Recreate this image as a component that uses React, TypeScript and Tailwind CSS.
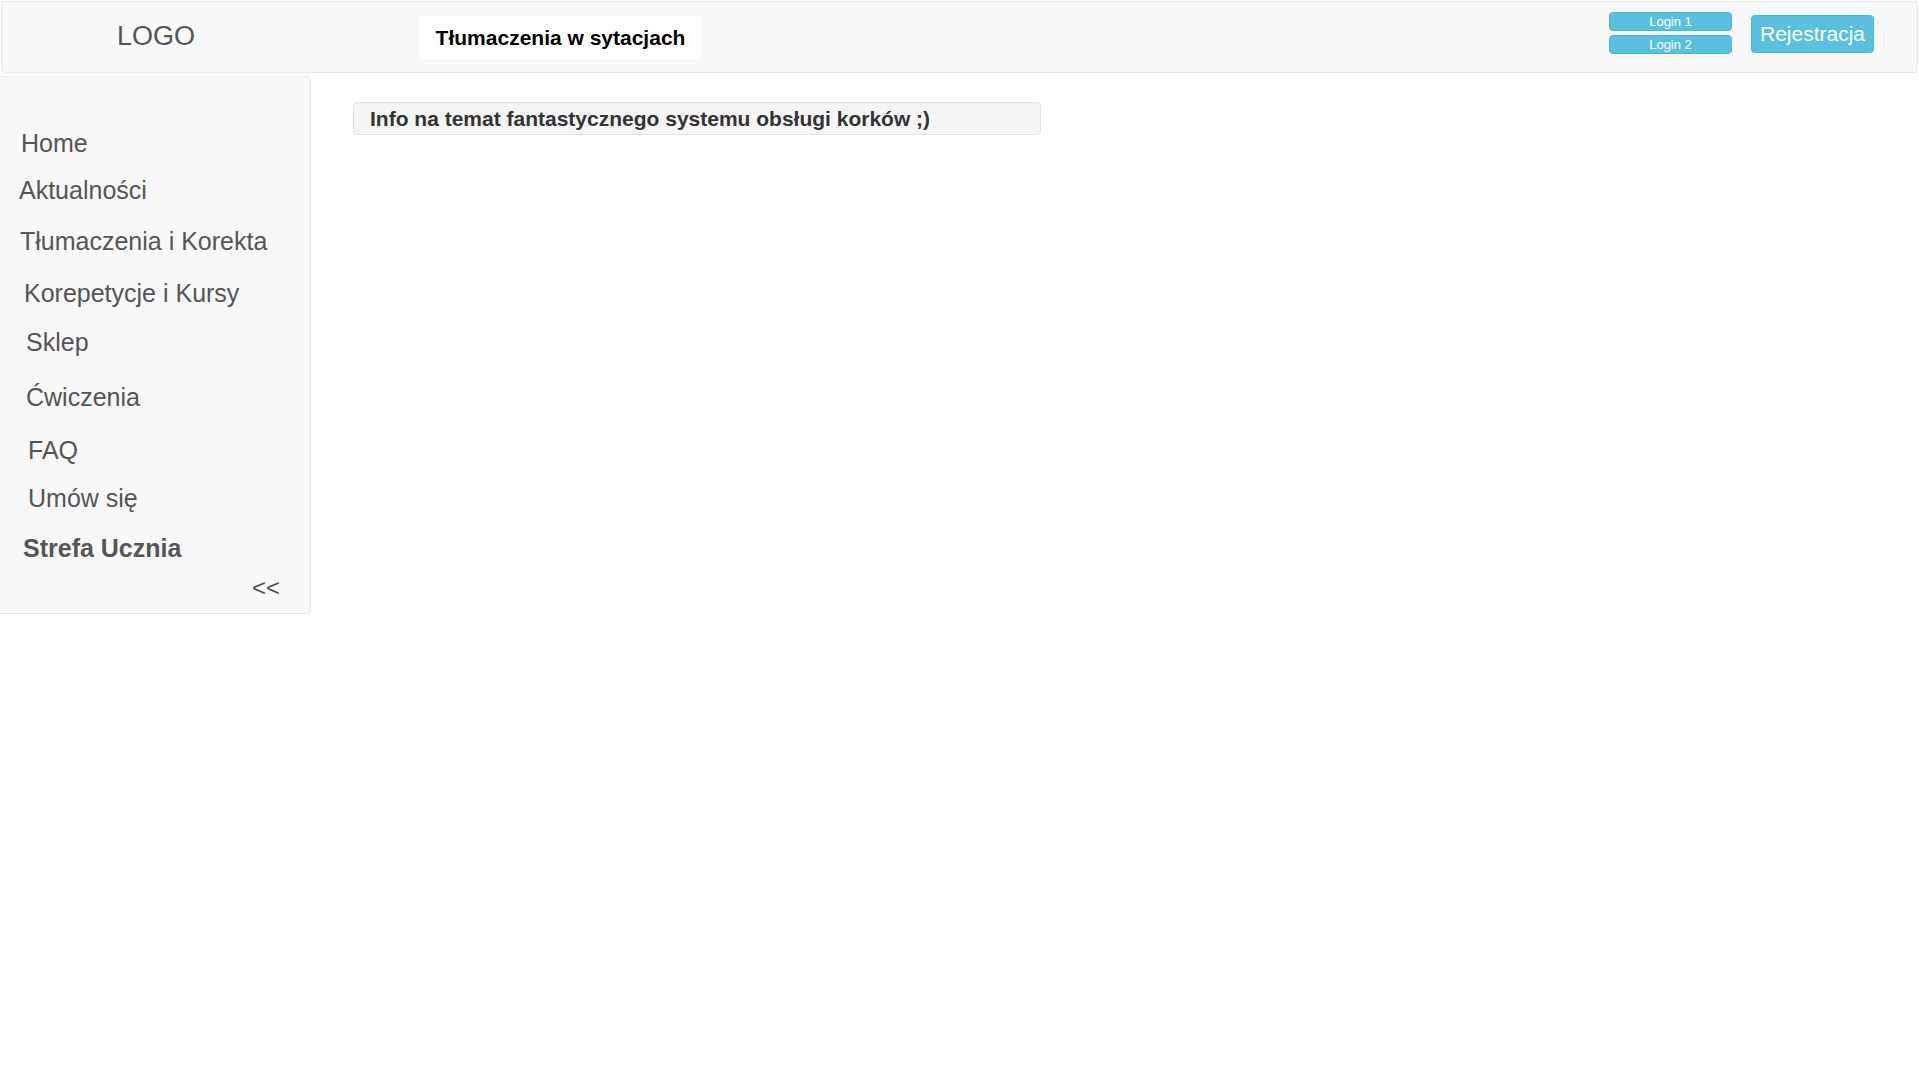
export default function App() {
  const font = { fontFamily: '"Liberation Sans", Arial, sans-serif' };

  return (
    <div className="min-h-screen bg-white text-[#555]" style={font}>
      <header className="mx-px mt-px flex h-[72px] items-center rounded border border-[#e7e7e7] bg-[#f8f8f8]">
        <div className="mb-[2px] w-[308px] text-center text-[27px] leading-[30px] text-[#555]">
          LOGO
        </div>
        <div className="ml-[109px] flex h-[43px] w-[283px] items-center justify-center rounded bg-white pt-[2px] text-[21px] font-bold text-black">
          Tłumaczenia w sytacjach
        </div>
        <div className="ml-auto mb-[8px] flex flex-col gap-[4px]">
          <button
            type="button"
            className="h-[19px] w-[123px] rounded border border-[#46b8da] bg-[#5bc0de] text-[13px] leading-[17px] text-white"
          >
            Login 1
          </button>
          <button
            type="button"
            className="h-[19px] w-[123px] rounded border border-[#46b8da] bg-[#5bc0de] text-[13px] leading-[17px] text-white"
          >
            Login 2
          </button>
        </div>
        <button
          type="button"
          className="mr-[43px] ml-[19px] mb-[7px] h-[38px] w-[123px] rounded border border-[#46b8da] bg-[#5bc0de] text-[21px] text-white"
        >
          Rejestracja
        </button>
      </header>

      <div className="mt-[3px] flex items-start">
        <nav className="flex h-[538px] w-[311px] flex-col rounded-r border border-l-0 border-[#e7e7e7] bg-[#f8f8f8] text-[25px] leading-[28px] text-[#555]">
          <a className="ml-[21px] mt-[52px]">Home</a>
          <a className="ml-[19px] mt-[19px]">Aktualności</a>
          <a className="ml-[20px] mt-[23px]">Tłumaczenia i Korekta</a>
          <a className="ml-[24px] mt-[24px]">Korepetycje i Kursy</a>
          <a className="ml-[26px] mt-[21px]">Sklep</a>
          <a className="ml-[26px] mt-[27px]">Ćwiczenia</a>
          <a className="ml-[28px] mt-[25px]">FAQ</a>
          <a className="ml-[28px] mt-[20px]">Umów się</a>
          <a className="ml-[23px] mt-[22px] font-bold">Strefa Ucznia</a>
          <a className="ml-[252px] mt-[12px] text-[24px]">&lt;&lt;</a>
        </nav>

        <main className="ml-[42px] mt-[26px]">
          <div className="flex h-[33px] w-[688px] items-center rounded border border-[#e3e3e3] bg-[#f5f5f5] pl-[16px] text-[21px] font-bold text-[#333]">
            Info na temat fantastycznego systemu obsługi korków ;)
          </div>
        </main>
      </div>
    </div>
  );
}
